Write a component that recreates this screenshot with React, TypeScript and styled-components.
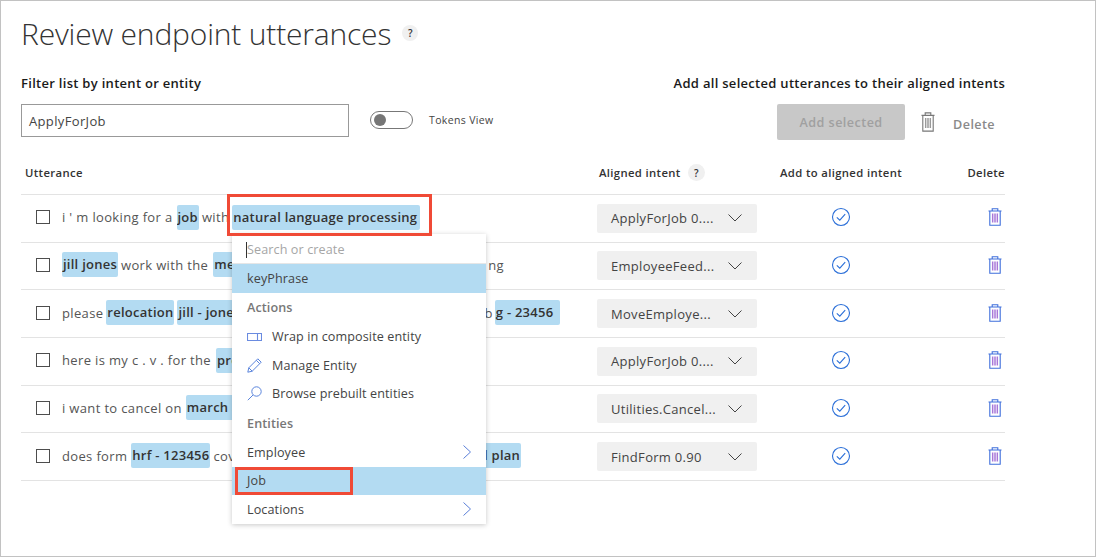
import React from "react"
import styled, { createGlobalStyle } from "styled-components"

const GlobalStyle = createGlobalStyle`
  html, body {
    margin: 0;
    padding: 0;
    background: #fff;
  }
  body {
    font-family: "Open Sans", "Noto Sans", "Liberation Sans", sans-serif;
    color: #333;
  }
`

const Frame = styled.div`
  box-sizing: border-box;
  position: relative;
  width: 1096px;
  height: 557px;
  padding: 0 90px 0 20px;
  border: 1px solid #c2c2c2;
  overflow: hidden;
`

const TitleRow = styled.div`
  display: flex;
  align-items: center;
  height: 64px;
  gap: 11px;
`

const Title = styled.h1`
  margin: 0;
  font-size: 30px;
  font-weight: 300;
  color: #333;
  letter-spacing: -0.18px;
`

const HelpBadge = styled.span<{ $size?: number }>`
  display: inline-flex;
  align-items: center;
  justify-content: center;
  width: ${({ $size }) => $size ?? 16}px;
  height: ${({ $size }) => $size ?? 16}px;
  border-radius: 50%;
  background: #f0f0f0;
  font-size: 10px;
  font-weight: 600;
  letter-spacing: 0;
  color: #333;
`

const Labels = styled.div`
  display: flex;
  justify-content: space-between;
  margin-top: 4px;
  height: 27px;
  align-items: center;
`

const Label = styled.div`
  font-size: 13px;
  font-weight: 600;
  letter-spacing: 0.29px;
  color: #1a1a1a;
`

const Controls = styled.div`
  display: flex;
  align-items: flex-start;
  margin-top: 8px;
  height: 51px;
`

const FilterInput = styled.div`
  box-sizing: border-box;
  width: 328px;
  height: 33px;
  padding: 1px 0 0 7px;
  border: 1px solid #999;
  font-size: 13px;
  letter-spacing: 0.35px;
  line-height: 31px;
  color: #444;
`

const Toggle = styled.span`
  box-sizing: border-box;
  display: flex;
  align-items: center;
  width: 43px;
  height: 18px;
  margin: 7px 0 0 21px;
  padding-left: 3px;
  border: 1px solid #777;
  border-radius: 9px;
`

const ToggleKnob = styled.span`
  width: 12px;
  height: 12px;
  border-radius: 50%;
  background: #767676;
`

const ToggleLabel = styled.span`
  margin: 7px 0 0 16px;
  font-size: 10.5px;
  letter-spacing: 0.36px;
  line-height: 18px;
  color: #444;
`

const BulkActions = styled.div`
  display: flex;
  align-items: center;
  margin-left: auto;
  margin-right: 10px;
  height: 36px;
`

const AddSelected = styled.div`
  display: flex;
  align-items: center;
  justify-content: center;
  width: 128px;
  height: 36px;
  margin-right: 16px;
  border-radius: 2px;
  background: #c8c8c8;
  font-size: 12.6px;
  font-weight: 600;
  letter-spacing: 0.45px;
  color: #a0a0a0;
`

const BulkDelete = styled.span`
  margin: 4px 0 0 18px;
  font-size: 12.6px;
  font-weight: 600;
  letter-spacing: 0.4px;
  color: #8a8a8a;
`

const Table = styled.div`
  position: relative;
  width: 984px;
`

const grid = `
  display: grid;
  grid-template-columns: 576px 160px 168px 80px;
  align-items: center;
`

const HeadRow = styled.div`
  ${grid}
  height: 40px;
  padding-bottom: 4px;
  border-bottom: 1px solid #e3e3e3;
  box-sizing: border-box;
  font-size: 11.3px;
  font-weight: 600;
  letter-spacing: 0.36px;
  color: #333;
`

const HeadCell = styled.div<{ $align?: string; $pad?: number }>`
  display: flex;
  align-items: center;
  gap: 7px;
  justify-content: ${({ $align }) => $align ?? "flex-start"};
  padding-left: ${({ $pad }) => $pad ?? 0}px;
`

const Row = styled.div`
  ${grid}
  box-sizing: border-box;
  height: 47.67px;
  padding-bottom: 2px;
  border-bottom: 1px solid #e3e3e3;
`

const UtteranceCell = styled.div`
  display: flex;
  align-items: center;
  padding-left: 15px;
  white-space: nowrap;
  font-size: 13px;
  letter-spacing: 0.35px;
  color: #555;
  overflow: hidden;
`

const Checkbox = styled.span`
  box-sizing: border-box;
  flex: none;
  width: 14px;
  height: 14px;
  margin-right: 12px;
  border: 1px solid #4d4d4d;
`

const Plain = styled.span<{ $gap?: number }>`
  flex: none;
  margin-right: ${({ $gap }) => $gap ?? 4}px;
`

const Entity = styled.span<{ $width?: number }>`
  display: inline-block;
  flex: none;
  box-sizing: border-box;
  height: 25px;
  width: ${({ $width }) => ($width ? `${$width}px` : "auto")};
  margin-right: 3px;
  padding: 0 1px;
  border-radius: 2px;
  background: #b3dbf2;
  font-weight: 600;
  letter-spacing: 0.25px;
  line-height: 24px;
  color: #333;
  overflow: hidden;
`

const Hidden = styled.span<{ $width: number }>`
  flex: none;
  width: ${({ $width }) => $width}px;
`

const IntentSelect = styled.div`
  display: flex;
  align-items: center;
  justify-content: space-between;
  box-sizing: border-box;
  width: 160px;
  height: 29px;
  margin-top: 2px;
  padding: 0 15px 0 14px;
  border-radius: 2px;
  background: #f0f0f0;
  font-size: 13px;
  letter-spacing: 0.3px;
  color: #444;
`

const IconCell = styled.div<{ $align?: string; $pad?: number }>`
  display: flex;
  justify-content: ${({ $align }) => $align ?? "center"};
  padding-right: ${({ $pad }) => $pad ?? 0}px;
`

const RedBox = styled.div<{ $x: number; $y: number; $w: number; $h: number }>`
  position: absolute;
  z-index: 2;
  box-sizing: border-box;
  left: ${({ $x }) => $x}px;
  top: ${({ $y }) => $y}px;
  width: ${({ $w }) => $w}px;
  height: ${({ $h }) => $h}px;
  border: 3px solid #f04a36;
`

const Menu = styled.div`
  position: absolute;
  z-index: 1;
  left: 211px;
  top: 79px;
  width: 254px;
  height: 290px;
  background: #fff;
  box-shadow: 0 1px 5px rgba(0, 0, 0, 0.22);
  font-size: 12.6px;
  letter-spacing: 0.1px;
  color: #444;
`

const SearchBox = styled.div`
  display: flex;
  align-items: center;
  box-sizing: border-box;
  height: 30px;
  padding: 2px 0 0 14px;
  border-bottom: 1px solid #e6e6e6;
  color: #a6a6a6;
`

const Caret = styled.span`
  width: 1px;
  height: 16px;
  background: #333;
`

const MenuItem = styled.div<{ $active?: boolean; $height?: number }>`
  display: flex;
  align-items: center;
  justify-content: space-between;
  box-sizing: border-box;
  height: ${({ $height }) => $height ?? 28.5}px;
  padding: 0 15px;
  background: ${({ $active }) => ($active ? "#b3dbf2" : "transparent")};
`

const SectionTitle = styled.div`
  display: flex;
  align-items: center;
  height: 30px;
  padding-left: 15px;
  font-weight: 600;
  color: #777;
`

const ActionLabel = styled.span`
  display: flex;
  align-items: center;
  gap: 10px;
`

const CheckIcon = () => (
  <svg width="20" height="20" viewBox="0 0 20 20" fill="none" stroke="#2b6fd8" strokeWidth="1.1">
    <circle cx="10" cy="10" r="8.5" />
    <path d="M5.8 10.3l3 2.9 5.4-6" />
  </svg>
)

const TrashIcon = ({
  color = "#3f6fdc",
  bars = "#a878d8",
  height = 18,
}: {
  color?: string
  bars?: string
  height?: number
}) => (
  <svg
    width="14"
    height={height}
    viewBox="0 0 14 18"
    preserveAspectRatio="none"
    fill="none"
    stroke={color}
    strokeWidth="1.1"
  >
    <path d="M.5 3h13M4.2 3V.8h5.6V3M1.8 3v14.2h10.4V3" />
    <path d="M4.5 5.5v9M6.2 5.5v9M7.8 5.5v9M9.5 5.5v9" stroke={bars} />
  </svg>
)

const Chevron = () => (
  <svg width="14" height="8" viewBox="0 0 14 8" fill="none" stroke="#444" strokeWidth="1">
    <path d="M.5.5L7 7l6.5-6.5" />
  </svg>
)

const ChevronRight = () => (
  <svg width="8" height="14" viewBox="0 0 8 14" fill="none" stroke="#5a7fd8" strokeWidth="1">
    <path d="M.5.5L7.5 7l-7 6.5" />
  </svg>
)

const WrapIcon = () => (
  <svg width="15" height="10" viewBox="0 0 15 10" fill="none" stroke="#6a8be0" strokeWidth="1.1">
    <path d="M.5 1.5h14v7H.5zM10.5 1.5v7" />
  </svg>
)

const PencilIcon = () => (
  <svg width="15" height="15" viewBox="0 0 15 15" fill="none" stroke="#5a84dc" strokeWidth="1">
    <path d="M.8 14.2l1-4.4L10.8.8l3.4 3.4-9 9zM1.8 9.8l3.4 3.4M9.3 2.3l3.4 3.4" />
  </svg>
)

const SearchIcon = () => (
  <svg width="15" height="15" viewBox="0 0 15 15" fill="none" stroke="#5a84dc" strokeWidth="1">
    <circle cx="9.5" cy="5.5" r="4.7" />
    <path d="M6 9L.8 14.2" />
  </svg>
)

type Part = { text?: string; entity?: boolean; width?: number; hidden?: number; gap?: number }

const rows: { parts: Part[]; intent: string }[] = [
  {
    intent: "ApplyForJob 0....",
    parts: [
      { text: "i ' m looking for a", gap: 4 },
      { text: "job", entity: true },
      { text: "with", gap: 3 },
      { text: "natural language processing", entity: true, width: 188 },
    ],
  },
  {
    intent: "EmployeeFeed...",
    parts: [
      { text: "jill jones", entity: true },
      { text: "work with the", gap: 5 },
      { text: "med", entity: true, width: 30 },
      { hidden: 242 },
      { text: "ng" },
    ],
  },
  {
    intent: "MoveEmploye...",
    parts: [
      { text: "please", gap: 3 },
      { text: "relocation", entity: true },
      { text: "jill - jones", entity: true, width: 70 },
      { hidden: 234 },
      { text: "b", gap: 2 },
      { text: "g - 23456", entity: true, width: 65 },
    ],
  },
  {
    intent: "ApplyForJob 0....",
    parts: [
      { text: "here is my c . v . for the", gap: 5 },
      { text: "pro", entity: true, width: 30 },
    ],
  },
  {
    intent: "Utilities.Cancel...",
    parts: [
      { text: "i want to cancel on", gap: 4 },
      { text: "march 3", entity: true, width: 60 },
    ],
  },
  {
    intent: "FindForm 0.90",
    parts: [
      { text: "does form", gap: 4 },
      { text: "hrf - 123456", entity: true },
      { text: "cov", gap: 0 },
      { hidden: 248 },
      { text: "l plan", entity: true },
    ],
  },
]

const App: React.FC = () => (
  <Frame>
    <GlobalStyle />
    <TitleRow>
      <Title>Review endpoint utterances</Title>
      <HelpBadge>?</HelpBadge>
    </TitleRow>
    <Labels>
      <Label>Filter list by intent or entity</Label>
      <Label>Add all selected utterances to their aligned intents</Label>
    </Labels>
    <Controls>
      <FilterInput>ApplyForJob</FilterInput>
      <Toggle>
        <ToggleKnob />
      </Toggle>
      <ToggleLabel>Tokens View</ToggleLabel>
      <BulkActions>
        <AddSelected>Add selected</AddSelected>
        <TrashIcon color="#777" bars="#999" height={20} />
        <BulkDelete>Delete</BulkDelete>
      </BulkActions>
    </Controls>
    <Table>
      <HeadRow>
        <HeadCell $pad={4}>Utterance</HeadCell>
        <HeadCell $pad={2}>
          Aligned intent <HelpBadge $size={17}>?</HelpBadge>
        </HeadCell>
        <HeadCell $align="center">Add to aligned intent</HeadCell>
        <HeadCell $align="flex-end">Delete</HeadCell>
      </HeadRow>
      {rows.map((row, i) => (
        <Row key={i}>
          <UtteranceCell>
            <Checkbox />
            {row.parts.map((part, j) => {
              if (part.hidden) return <Hidden key={j} $width={part.hidden} />
              if (part.entity)
                return (
                  <Entity key={j} $width={part.width}>
                    {part.text}
                  </Entity>
                )
              return (
                <Plain key={j} $gap={part.gap}>
                  {part.text}
                </Plain>
              )
            })}
          </UtteranceCell>
          <IntentSelect>
            {row.intent}
            <Chevron />
          </IntentSelect>
          <IconCell>
            <CheckIcon />
          </IconCell>
          <IconCell $align="flex-end" $pad={3}>
            <TrashIcon />
          </IconCell>
        </Row>
      ))}
      <RedBox $x={206} $y={39} $w={205} $h={42} />
      <RedBox $x={214} $y={312} $w={118} $h={28} />
      <Menu>
        <SearchBox>
          <Caret />
          Search or create
        </SearchBox>
        <MenuItem $active>keyPhrase</MenuItem>
        <SectionTitle>Actions</SectionTitle>
        <MenuItem>
          <ActionLabel>
            <WrapIcon />
            Wrap in composite entity
          </ActionLabel>
        </MenuItem>
        <MenuItem>
          <ActionLabel>
            <PencilIcon />
            Manage Entity
          </ActionLabel>
        </MenuItem>
        <MenuItem>
          <ActionLabel>
            <SearchIcon />
            Browse prebuilt entities
          </ActionLabel>
        </MenuItem>
        <SectionTitle>Entities</SectionTitle>
        <MenuItem>
          Employee
          <ChevronRight />
        </MenuItem>
        <MenuItem $active>Job</MenuItem>
        <MenuItem>
          Locations
          <ChevronRight />
        </MenuItem>
      </Menu>
    </Table>
  </Frame>
)

export default App
